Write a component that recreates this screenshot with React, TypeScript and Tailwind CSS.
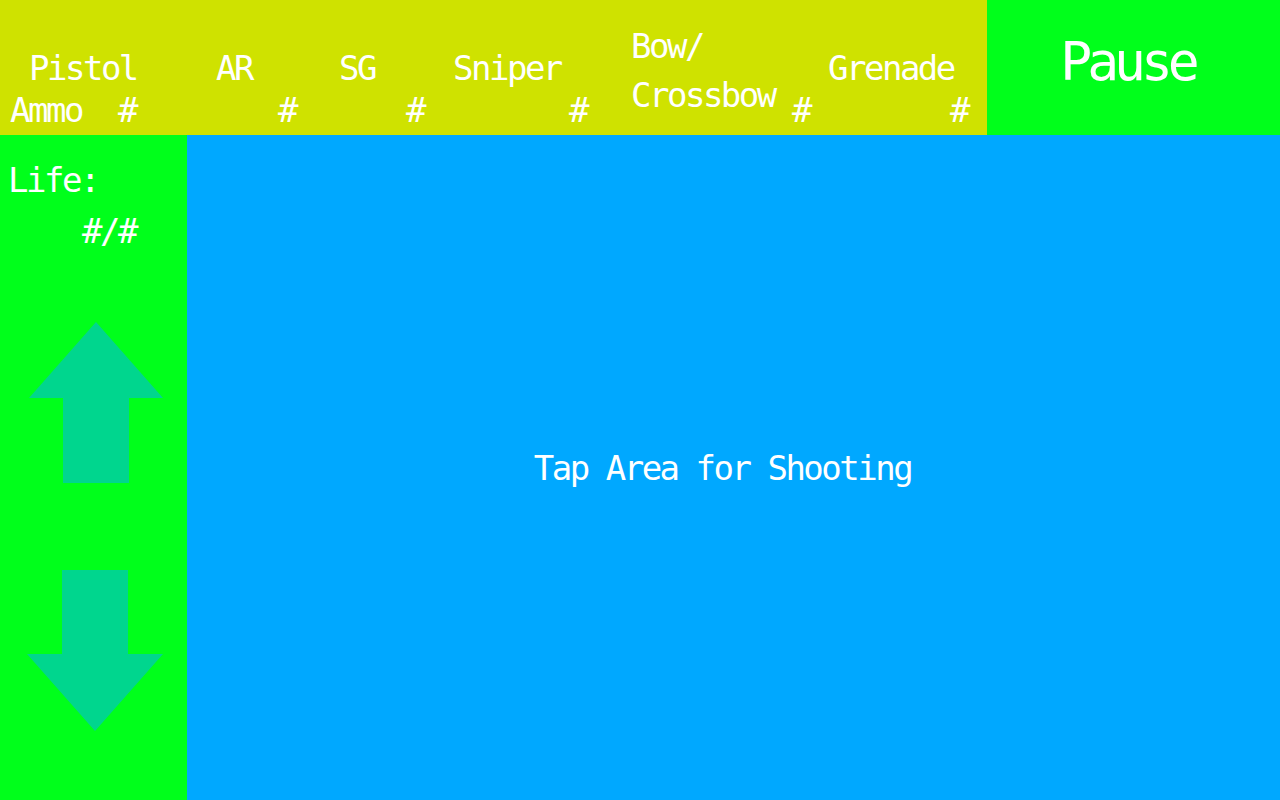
import React from "react";

const F = "font-['DejaVu_Sans_Mono',monospace] text-[34px] tracking-[-2.5px] text-white";

function Col({ w, pl, name, lh = "leading-[40px]", mt = "mt-[48px]" }: { w: string; pl: string; name: React.ReactNode; lh?: string; mt?: string }) {
  return (
    <div className={`flex flex-col h-full shrink-0 ${w}`}>
      <div className={`${mt} ${pl} ${lh} h-[40px] whitespace-nowrap`}>{name}</div>
      <div className="mt-auto mb-[5px] leading-[40px] text-right">#</div>
    </div>
  );
}

export default function App() {
  return (
    <div className={`w-[1280px] h-[800px] flex flex-col overflow-hidden ${F}`}>
      <div className="flex h-[135px] shrink-0">
        <div className="flex h-full w-[987px] bg-[#cfe200]">
          <div className="flex flex-col h-full w-[136px] shrink-0">
            <div className="mt-[48px] pl-[29px] leading-[40px]">Pistol</div>
            <div className="mt-auto mb-[5px] leading-[40px] flex justify-between">
              <span className="pl-[10px]">Ammo</span>
              <span>#</span>
            </div>
          </div>
          <Col w="w-[160px]" pl="pl-[80px]" name="AR" />
          <Col w="w-[128px]" pl="pl-[43px]" name="SG" />
          <Col w="w-[163px]" pl="pl-[29px]" name="Sniper" />
          <Col w="w-[223px]" pl="pl-[44px]" name={<>Bow/<br />Crossbow</>} lh="leading-[49px]" mt="mt-[22px]" />
          <Col w="w-[158px]" pl="pl-[18px]" name="Grenade" />
        </div>
        <div className="flex-1 bg-[#00ff1b] flex items-center justify-center pb-[12px] pr-[12px]">
          <span className="text-[53px] tracking-[-5px] leading-none">Pause</span>
        </div>
      </div>
      <div className="flex flex-1">
        <div className="w-[187px] shrink-0 bg-[#00ff1b] flex flex-col">
          <div className="mt-[25px] pl-[8px] leading-[40px]">Life:</div>
          <div className="mt-[11px] pl-[82px] leading-[40px]">#/#</div>
          <svg className="mt-[71px] ml-[29px]" width="134" height="161" viewBox="0 0 134 161">
            <polygon points="67,0 134,76 100,76 100,161 34,161 34,76 0,76" fill="#00d68e" />
          </svg>
          <svg className="mt-[87px] ml-[27px]" width="136" height="161" viewBox="0 0 136 161">
            <polygon points="35,0 101,0 101,84 136,84 68,161 0,84 35,84" fill="#00d68e" />
          </svg>
        </div>
        <div className="flex-1 bg-[#00a8ff] flex items-center justify-center pr-[22px]">
          <span className="leading-[40px]">Tap Area for Shooting</span>
        </div>
      </div>
    </div>
  );
}
